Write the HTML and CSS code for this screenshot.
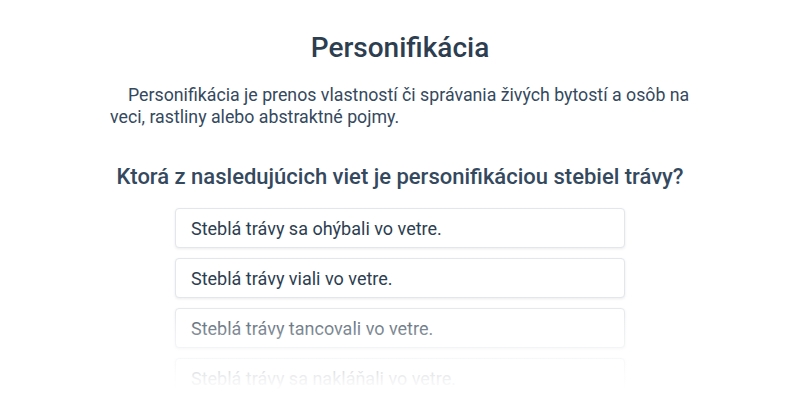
FILE: index.html
```html
<!DOCTYPE html>
<html lang="sk">
<head>
<meta charset="utf-8">
<title>Personifikácia</title>
<link rel="stylesheet" href="styles.css">
</head>
<body>
<main class="page">
  <h1 class="title">Personifikácia</h1>
  <p class="intro">Personifikácia je prenos vlastností či správania živých bytostí a osôb na veci, rastliny alebo abstraktné pojmy.</p>
  <h2 class="question">Ktorá z nasledujúcich viet je personifikáciou stebiel trávy?</h2>
  <ul class="options">
    <li class="option">Steblá trávy sa ohýbali vo vetre.</li>
    <li class="option">Steblá trávy viali vo vetre.</li>
    <li class="option">Steblá trávy tancovali vo vetre.</li>
    <li class="option">Steblá trávy sa nakláňali vo vetre.</li>
  </ul>
</main>
<div class="fade"></div>
</body>
</html>
```
FILE: styles.css
```css
html, body {
  margin: 0;
  padding: 0;
  background: #ffffff;
  height: 400px;
  overflow: hidden;
}
body {
  font-family: Roboto, "Liberation Sans", sans-serif;
  color: #2c3e50;
}
.page {
  width: 580px;
  margin: 0 auto;
  padding-top: 30px;
}
.title {
  margin: 0;
  font-size: 28px;
  font-weight: 500;
  line-height: 36px;
  text-align: center;
  color: #2c3e50;
}
.intro {
  margin: 18px -4px 0 0;
  font-size: 17.75px;
  line-height: 22px;
  text-indent: 18px;
  color: #34495e;
}
.question {
  margin: 34px 0 0;
  font-size: 22px;
  font-weight: 500;
  line-height: 30px;
  text-align: center;
  color: #34495e;
}
.options {
  list-style: none;
  margin: 16px auto 0;
  padding: 0;
  width: 450px;
  display: flex;
  flex-direction: column;
  gap: 10px;
}
.option {
  box-sizing: border-box;
  height: 40px;
  padding: 0 15px;
  display: flex;
  align-items: center;
  font-size: 18px;
  color: #2c3e50;
  background: #fff;
  border: 1px solid #e3e6ea;
  border-radius: 4px;
  box-shadow: 0 1px 3px rgba(0,0,0,0.08);
}
.fade {
  position: absolute;
  left: 0;
  right: 0;
  top: 300px;
  height: 100px;
  background: linear-gradient(to bottom, rgba(255,255,255,0) 0%, rgba(255,255,255,0.35) 28%, rgba(255,255,255,0.9) 76%, #fff 90%);
  pointer-events: none;
}
```
